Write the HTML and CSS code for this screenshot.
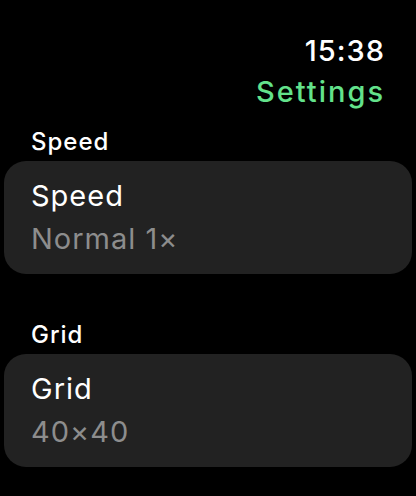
FILE: index.html
```html
<!DOCTYPE html>
<html lang="en">
<head>
<meta charset="UTF-8">
<meta name="viewport" content="width=device-width, initial-scale=1.0">
<title>Settings</title>
<link rel="stylesheet" href="styles.css">
</head>
<body>
  <header class="top-bar">
    <div class="clock">15:38</div>
    <div class="page-title">Settings</div>
  </header>

  <main class="list">
    <section class="group">
      <h2 class="group-title">Speed</h2>
      <div class="cell">
        <div class="cell-title">Speed</div>
        <div class="cell-value">Normal 1×</div>
      </div>
    </section>

    <section class="group">
      <h2 class="group-title">Grid</h2>
      <div class="cell">
        <div class="cell-title">Grid</div>
        <div class="cell-value">40×40</div>
      </div>
    </section>
  </main>
</body>
</html>
```

FILE: styles.css
```css
/* watch style settings screen */
body {
  margin: 0;
  padding: 0;
  background-color: #000;
  color: #fff;
  font-family: Inter, "Noto Sans", sans-serif;
  width: 416px;
  height: 496px;
  overflow: hidden;
}

.top-bar {
  display: flex;
  flex-direction: column;
  align-items: flex-end;
  padding: 34px 31px 0 0;
  gap: 7px;
}

.clock {
  font-size: 29px;
  line-height: 34px;
  font-weight: 500;
  letter-spacing: 1px;
}

.page-title {
  font-size: 29px;
  line-height: 34px;
  font-weight: 500;
  color: #63e28b;
  letter-spacing: 2px;
}

.list {
  display: flex;
  flex-direction: column;
  gap: 49px;
  padding: 21px 4px 0 4px;
}

.group-title {
  margin: 0 0 7px 0;
  padding-left: 27px;
  font-size: 24px;
  line-height: 24px;
  font-weight: 500;
  letter-spacing: 1px;
}

.cell {
  background-color: #222222;
  border-radius: 22px;
  padding: 17px 26px 17px 27px;
  display: flex;
  flex-direction: column;
  gap: 7px;
}

.cell-title {
  font-size: 29px;
  line-height: 36px;
  letter-spacing: 1px;
}

.cell-value {
  font-size: 29px;
  line-height: 36px;
  color: #8d8d8d;
  letter-spacing: 1px;
}
```
